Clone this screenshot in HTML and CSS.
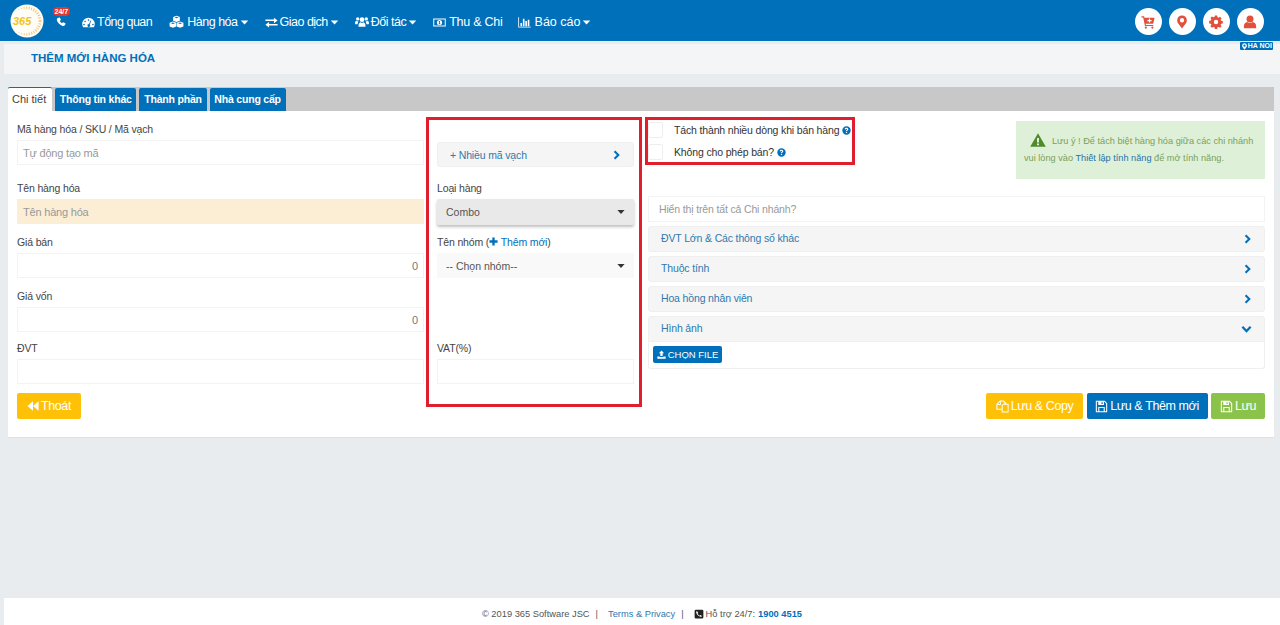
FILE: index.html
```html
<!DOCTYPE html>
<html lang="en">
<head>
  <meta charset="UTF-8" />
  <title>Thêm mới hàng hóa</title>
  <link rel="stylesheet" href="styles.css">
</head>
<body>
  <svg class="sprite" xmlns="http://www.w3.org/2000/svg">
    <symbol id="i-phone" viewBox="0 0 16 16"><path d="M4 1.2 6.2.8l1.6 4L6 6.4c.8 1.7 1.9 2.800 3.600 3.600l1.600-1.800 4 1.600-.4 2.300c-.4 1.900-2.300 2.800-4.300 2.100C6.300 13 3 9.700 1.500 5.600.8 3.600 2.100 1.600 4 1.200z"/></symbol>
    <symbol id="i-gauge" viewBox="0 0 16 16"><path fill-rule="evenodd" d="M8 2.200A7.700 7.700 0 0 0 .3 9.900c0 1.500.4 2.700 1.100 3.900h13.200c.7-1.200 1.100-2.400 1.100-3.900A7.700 7.700 0 0 0 8 2.200zM8 4a1 1 0 1 1 0 2 1 1 0 0 1 0-2zM3.800 5.800a1 1 0 1 1 0 2 1 1 0 0 1 0-2zM2.500 9.600a1 1 0 1 1 0 2 1 1 0 0 1 0-2zm11 0a1 1 0 1 1 0 2 1 1 0 0 1 0-2zM10.600 5.500l.9.400-2 4.500a1.700 1.700 0 1 1-1-.400z"/></symbol>
    <symbol id="i-cubes" viewBox="0 0 18 16"><path fill-rule="evenodd" d="M9 .5l4 1.500v4.400L9 8 5 6.400V2zM9 1.700 6.600 2.600 9 3.500l2.400-.9zM4.700 7.500l4 1.500v4.400l-4 1.600-4-1.600V9zm0 1.200-2.400.9 2.400.9 2.400-.9zm8.600-1.200 4 1.500v4.400l-4 1.600-4-1.600V9zm0 1.200-2.400.9 2.400.9 2.400-.9z"/></symbol>
    <symbol id="i-exchange" viewBox="0 0 16 16"><path d="M.5 4.200h10.500V2l4.500 3.400-4.500 3.400V6.300H.5zM15.500 9.700H5V7.500L.5 10.900 5 14.300v-2.500h10.500z"/></symbol>
    <symbol id="i-users" viewBox="0 0 18 16"><circle cx="9" cy="5" r="3"/><circle cx="3.500" cy="4" r="2.200"/><circle cx="14.500" cy="4" r="2.200"/><path d="M4.500 14c-.3-3 1-5.500 2.500-5.800.6.500 1.300.8 2 .8s1.400-.3 2-.8c1.500.3 2.800 2.800 2.500 5.800zM0 10c0-2 .6-3.500 1.700-3.700.5.400 1.100.7 1.800.7l.9-.1c-.6 1.100-1 2.400-1 4.100H.8C.3 11 0 10.600 0 10zm18 0c0-2-.6-3.500-1.700-3.700-.5.400-1.100.7-1.800.7l-.9-.1c.6 1.100 1 2.400 1 4.100h2.600c.5 0 .8-.4.800-1z"/></symbol>
    <symbol id="i-money" viewBox="0 0 16 16"><path fill-rule="evenodd" d="M.3 3h15.400v10H.3zM1.500 4.200v7.600h13V4.200zM8 4.800a3.200 3.200 0 1 1 0 6.400 3.200 3.200 0 0 1 0-6.400zM7 6.300v.9h.6v2H7V10h2.200v-.8h-.6V6.300z"/></symbol>
    <symbol id="i-chart" viewBox="0 0 16 16"><path d="M.3 1.500h1v11.700h14.400v1H.3zM3 8.500h2v4H3zM6 3.500h2v9H6zM9 6h2v6.500H9zM12 4.500h2v8h-2z"/></symbol>
    <symbol id="i-caret" viewBox="0 0 10 6"><path d="M.5.500h9L5 5.500z"/></symbol>
    <symbol id="i-cart" viewBox="0 0 16 16"><path fill-rule="evenodd" d="M.5 1.500h3l.5 1.500h11.500l-1.500 7H5.300l.3 1.300H14v1.300H4.500L2.500 2.800h-2zM9 4v1.700H7.300V7H9v1.700h1.400V7h1.700V5.700h-1.700V4zM5.500 13a1.300 1.300 0 1 1 0 2.600 1.300 1.300 0 0 1 0-2.600zm7.500 0a1.300 1.300 0 1 1 0 2.600 1.300 1.300 0 0 1 0-2.600z"/></symbol>
    <symbol id="i-marker" viewBox="0 0 16 16"><path fill-rule="evenodd" d="M8 .5a5.500 5.500 0 0 0-5.500 5.500c0 1.200.3 2 .8 3L8 15.500 12.700 9c.5-1 .8-1.800.8-3A5.500 5.500 0 0 0 8 .500zm0 3a2.500 2.500 0 1 1 0 5 2.500 2.500 0 0 1 0-5z"/></symbol>
    <symbol id="i-cog" viewBox="0 0 16 16"><path fill-rule="evenodd" d="M6.700.5h2.600l.4 2 1.200.5 1.700-1.100 1.800 1.800-1.100 1.700.5 1.200 2 .4v2.600l-2 .4-.5 1.200 1.100 1.700-1.800 1.800-1.700-1.100-1.200.5-.4 2H6.700l-.4-2-1.200-.5-1.700 1.100-1.800-1.800 1.100-1.700-.5-1.200-2-.4V6.700l2-.4.5-1.200-1.100-1.700 1.800-1.800 1.700 1.100 1.200-.5zM8 5.500a2.500 2.500 0 1 0 0 5 2.500 2.500 0 0 0 0-5z"/></symbol>
    <symbol id="i-user" viewBox="0 0 16 16"><circle cx="8" cy="4.500" r="4"/><path d="M1 15v-2.500C1 10 2.800 8.300 4.800 8c.8.700 2 1.100 3.200 1.100s2.400-.4 3.200-1.100c2 .3 3.800 2 3.800 4.500V15z"/></symbol>
    <symbol id="i-right" viewBox="0 0 10 12"><path d="M2.800.5 8.500 6l-5.700 5.500L1 9.700 4.900 6 1 2.300z"/></symbol>
    <symbol id="i-down" viewBox="0 0 12 10"><path d="M.5 2.800 2.300 1 6 4.900 9.700 1l1.800 1.800L6 8.500z"/></symbol>
    <symbol id="i-plus" viewBox="0 0 10 10"><path d="M3.700.5h2.600v3.200h3.200v2.600H6.300v3.200H3.700V6.300H.5V3.700h3.200z"/></symbol>
    <symbol id="i-help" viewBox="0 0 16 16"><path fill-rule="evenodd" d="M8 .5a7.500 7.500 0 1 1 0 15 7.500 7.500 0 0 1 0-15zM8 3C6.300 3 5 3.900 4.600 5.400l1.900.7C6.700 5.400 7.200 5 7.900 5c.7 0 1.200.4 1.200.9 0 .5-.4.800-1 1.200-.8.500-1.200 1-1.200 2v.4h2v-.3c0-.4.200-.6.800-1 .9-.6 1.500-1.300 1.500-2.400C11.200 4.100 9.800 3 8 3zM6.900 10.500v2h2.200v-2z"/></symbol>
    <symbol id="i-warning" viewBox="0 0 16 14"><path fill-rule="evenodd" d="M8 .3 15.800 13.700H.2zM7 5v4.500h2V5zM7 10.500v1.800h2v-1.800z"/></symbol>
    <symbol id="i-upload" viewBox="0 0 12 12"><path d="M6 .5 9.500 4.300H7.500V8h-3V4.300H2.500zM.5 8.500h3v.8h5v-.8h3v3h-11z"/></symbol>
    <symbol id="i-copy" viewBox="0 0 16 16"><path fill-rule="evenodd" d="M5 .5h4.500l3 3v1h3v11H7v-3.500H.5V4.500zM5 2 2 5h3zM6 1.700v4.300H1.700v4.800H7V6.500l2.500-2.200h1.700L9 2v-.3zM9.500 5.800 8.200 7.200V14.300h6.100V5.800z"/></symbol>
    <symbol id="i-save" viewBox="0 0 16 16"><path fill-rule="evenodd" d="M1 1h11l3 3v11H1zM2.300 2.300v11.400h1.700V8.500h8v5.200h1.700V4.600L11.500 2.300H11V6H4V2.300zM5.300 9.800v3.900h5.400V9.800zM8 2.800v2.200h1.500V2.800z"/></symbol>
    <symbol id="i-back" viewBox="0 0 14 12"><path d="M7 .5v11L.5 6zM13.500.5v11L7 6z"/></symbol>
    <symbol id="i-phonebox" viewBox="0 0 16 16"><path fill-rule="evenodd" d="M3 1h10a2 2 0 0 1 2 2v10a2 2 0 0 1-2 2H3a2 2 0 0 1-2-2V3a2 2 0 0 1 2-2zm2 2.500L3.500 4c-.4 3.800 3.500 8.400 8.500 8.500l.5-1.800-2.600-1.200-1 1.200C7.500 10 6 8.500 5.700 7.300l1.100-1z"/></symbol>
  </svg>

  <div class="topbar">
    <div class="logo">
      <svg viewBox="0 0 34 34" width="34" height="34">
        <circle cx="17" cy="17" r="16.500" fill="#fffdf6"/>
        <circle cx="17" cy="17" r="13" fill="none" stroke="#f6a93b" stroke-width="3" stroke-dasharray="1 1.500" opacity="0.7"/>
        <circle cx="14" cy="17" r="12.500" fill="#fffdf6"/>
        <text x="3" y="20.500" class="logo-text">365</text>
      </svg>
    </div>
    <div class="hotline">
      <span class="hotline-badge">24/7</span>
      <svg class="ic ic-hotline"><use href="#i-phone"/></svg>
    </div>
    <ul class="menu">
      <li class="m1"><svg class="ic"><use href="#i-gauge"/></svg>Tổng quan</li>
      <li class="m2"><svg class="ic ic-w"><use href="#i-cubes"/></svg>Hàng hóa<svg class="caret"><use href="#i-caret"/></svg></li>
      <li class="m3"><svg class="ic"><use href="#i-exchange"/></svg>Giao dịch<svg class="caret"><use href="#i-caret"/></svg></li>
      <li class="m4"><svg class="ic ic-w"><use href="#i-users"/></svg>Đối tác<svg class="caret"><use href="#i-caret"/></svg></li>
      <li class="m5"><svg class="ic"><use href="#i-money"/></svg>Thu &amp; Chi</li>
      <li class="m6"><svg class="ic"><use href="#i-chart"/></svg>Báo cáo<svg class="caret"><use href="#i-caret"/></svg></li>
    </ul>
    <div class="actions">
      <span class="round"><svg><use href="#i-cart"/></svg></span>
      <span class="round"><svg><use href="#i-marker"/></svg></span>
      <span class="round"><svg><use href="#i-cog"/></svg></span>
      <span class="round"><svg><use href="#i-user"/></svg></span>
    </div>
  </div>

  <div class="titlebar">
    <h1>THÊM MỚI HÀNG HÓA</h1>
    <span class="branch"><svg><use href="#i-marker"/></svg>HA NOI</span>
  </div>

  <div class="content">
    <div class="tabs">
      <span class="tab active">Chi tiết</span>
      <span class="tab">Thông tin khác</span>
      <span class="tab">Thành phần</span>
      <span class="tab">Nhà cung cấp</span>
    </div>
    <div class="card">
      <div class="col col-left">
        <label class="field-label first">Mã hàng hóa / SKU / Mã vạch</label>
        <div class="input placeholder">Tự động tạo mã</div>
        <label class="field-label tall">Tên hàng hóa</label>
        <div class="input input-required placeholder">Tên hàng hóa</div>
        <label class="field-label">Giá bán</label>
        <div class="input number">0</div>
        <label class="field-label">Giá vốn</label>
        <div class="input number">0</div>
        <label class="field-label tight">ĐVT</label>
        <div class="input"></div>
        <button class="btn btn-yellow btn-exit"><svg><use href="#i-back"/></svg>Thoát</button>
      </div>

      <div class="col col-mid">
        <div class="bar bar-barcode">+ Nhiều mã vạch<svg class="chev"><use href="#i-right"/></svg></div>
        <label class="field-label label-type">Loại hàng</label>
        <div class="select select-active">Combo<svg class="sel-caret"><use href="#i-caret"/></svg></div>
        <label class="field-label label-group">Tên nhóm (<svg class="plus"><use href="#i-plus"/></svg> <a>Thêm mới</a>)</label>
        <div class="select select-group">-- Chọn nhóm--<svg class="sel-caret"><use href="#i-caret"/></svg></div>
        <label class="field-label label-vat">VAT(%)</label>
        <div class="input"></div>
      </div>

      <div class="col col-right">
        <div class="right-top">
          <div class="checks">
            <div class="check"><span class="box"></span>Tách thành nhiều dòng khi bán hàng<svg class="help"><use href="#i-help"/></svg></div>
            <div class="check"><span class="box"></span>Không cho phép bán?<svg class="help"><use href="#i-help"/></svg></div>
          </div>
          <div class="notice">
            <p><svg class="warn"><use href="#i-warning"/></svg>Lưu ý ! Để tách biệt hàng hóa giữa các chi nhánh</p>
            <p>vui lòng vào <a>Thiết lập tính năng</a> để mở tính năng.</p>
          </div>
        </div>
        <div class="input placeholder all-branch">Hiển thị trên tất cả Chi nhánh?</div>
        <div class="bar">ĐVT Lớn &amp; Các thông số khác<svg class="chev"><use href="#i-right"/></svg></div>
        <div class="bar">Thuộc tính<svg class="chev"><use href="#i-right"/></svg></div>
        <div class="bar">Hoa hồng nhân viên<svg class="chev"><use href="#i-right"/></svg></div>
        <div class="bar bar-open">Hình ảnh<svg class="chev-down"><use href="#i-down"/></svg></div>
        <div class="bar-body"><button class="btn-file"><svg><use href="#i-upload"/></svg>CHỌN FILE</button></div>
        <div class="buttons">
          <button class="btn btn-yellow"><svg><use href="#i-copy"/></svg>Lưu &amp; Copy</button>
          <button class="btn btn-blue"><svg><use href="#i-save"/></svg>Lưu &amp; Thêm mới</button>
          <button class="btn btn-green"><svg><use href="#i-save"/></svg>Lưu</button>
        </div>
      </div>

      <div class="mark mark-mid"></div>
      <div class="mark mark-checks"></div>
    </div>
  </div>

  <div class="footer">
    <span>© 2019 365 Software JSC</span><span class="sep">|</span>
    <a>Terms &amp; Privacy</a><span class="sep">|</span>
    <svg><use href="#i-phonebox"/></svg><span>Hỗ trợ 24/7:</span><b>1900 4515</b>
  </div>
</body>
</html>
```

FILE: styles.css
```css
* { box-sizing: border-box; }

body {
  margin: 0;
  height: 625px;
  overflow: hidden;
  display: flex;
  flex-direction: column;
  background: #e9ecef;
  font-family: "Liberation Sans", Arial, sans-serif;
  font-size: 11px;
  color: #444;
}

.sprite { display: none; }

a { color: #0070ba; }

svg { fill: currentColor; }

/* top bar */
.topbar {
  height: 41px;
  flex: none;
  background: #0070ba;
  color: #fff;
  display: flex;
  align-items: center;
  padding-left: 10px;
}

.logo {
  width: 34px;
  height: 34px;
  flex: none;
}

.logo svg { display: block; }

.logo-text {
  font-size: 11px;
  font-weight: bold;
  font-style: italic;
  fill: #f2c318;
}

.hotline {
  position: relative;
  width: 38px;
  height: 41px;
  flex: none;
}

.hotline-badge {
  position: absolute;
  left: 9px;
  top: 7px;
  padding: 0 1.500px;
  height: 9px;
  line-height: 9px;
  border-radius: 5px;
  background: #e2372f;
  font-size: 7px;
  font-weight: bold;
}

.ic-hotline {
  position: absolute;
  left: 12px;
  top: 17px;
  width: 10px;
  height: 10px;
}

.menu {
  list-style: none;
  margin: 3px 0 0;
  padding: 0;
  display: flex;
  font-size: 12.500px;
  letter-spacing: -0.5px;
}

.menu li {
  display: flex;
  align-items: center;
  white-space: nowrap;
}

.menu .ic {
  width: 13px;
  height: 13px;
  margin-right: 2px;
}

.menu .ic-w {
  width: 15px;
  height: 14px;
  margin-right: 3px;
}

.menu .m4 .ic-w {
  width: 14px;
  margin-right: 2px;
}

.menu .caret {
  width: 9px;
  height: 5px;
  margin-left: 2px;
}

.m2 { margin-left: 17px; }
.m3 { margin-left: 16px; }
.m4 { margin-left: 16px; }

.menu .m5 {
  margin-left: 16px;
  letter-spacing: -0.25px;
}

.menu .m5 .ic { margin-right: 3px; }

.menu .m6 {
  margin-left: 15px;
  letter-spacing: 0;
}

.menu .m6 .ic { margin-right: 4px; }

.actions {
  margin: 2px 16.500px 0 auto;
  display: flex;
  gap: 7px;
}

.round {
  width: 27px;
  height: 27px;
  border-radius: 50%;
  background: #fff;
  color: #e2503c;
  display: flex;
  align-items: center;
  justify-content: center;
}

.round svg {
  width: 14px;
  height: 14px;
}

/* page title */
.titlebar {
  position: relative;
  height: 30px;
  flex: none;
  margin: 3px 0 13px 4px;
  padding: 0 0 2px 27px;
  background: #f3f5f7;
  display: flex;
  align-items: center;
}

.titlebar h1 {
  margin: 0;
  font-size: 11.500px;
  color: #0070ba;
}

.branch {
  position: absolute;
  right: 7px;
  top: -2px;
  height: 8px;
  padding: 0 1px;
  border-radius: 1px;
  background: #0070ba;
  color: #fff;
  font-size: 7px;
  font-weight: bold;
  line-height: 8px;
  display: flex;
  align-items: center;
}

.branch svg {
  width: 7px;
  height: 7px;
}

/* tabs and card */
.content {
  margin: 0 6px 0 8px;
}

.tabs {
  height: 24px;
  background: #c8c8c8;
  display: flex;
  align-items: flex-end;
  gap: 3px;
}

.tab {
  height: 23px;
  padding: 0 4.800px;
  border-radius: 2px 2px 0 0;
  background: #0070ba;
  color: #fff;
  font-size: 10.500px;
  letter-spacing: -0.2px;
  font-weight: bold;
  line-height: 23px;
}

.tab.active {
  width: 44px;
  height: 24px;
  padding: 0 4px;
  border-top: 1px solid #0070ba;
  background: #fff;
  color: #444;
  font-size: 11px;
  letter-spacing: 0;
  font-weight: normal;
}

.card {
  position: relative;
  height: 327px;
  padding: 0 9px;
  background: #fff;
  border-bottom: 1px solid #dde1e4;
  display: grid;
  grid-template-columns: 407px 198px 617px;
  column-gap: 13px;
}

.col {
  display: flex;
  flex-direction: column;
  align-items: stretch;
}

.col-mid { padding-right: 1px; }

.field-label {
  display: block;
  height: 13px;
  line-height: 13px;
  margin: 12px 0 4px;
  font-size: 10.500px;
  letter-spacing: -0.15px;
}

.field-label.tall { margin-top: 17px; }
.field-label.tight { margin-top: 10px; }

.input {
  height: 25px;
  line-height: 24px;
  padding: 0 5px;
  border: 1px solid #f3f3f3;
  background: #fff;
  font-size: 11px;
  letter-spacing: -0.2px;
}

.placeholder { color: #999; }

.input-required {
  background: #fbeed5;
  border-color: #fbeed5;
}

.number {
  text-align: right;
  color: #777;
}

.btn {
  height: 26px;
  padding: 0;
  border: 0;
  border-radius: 2px;
  color: #fff;
  font-family: inherit;
  font-size: 12.500px;
  letter-spacing: -0.4px;
  display: inline-flex;
  align-items: center;
  justify-content: center;
}

.btn svg {
  width: 12px;
  height: 12px;
  margin-right: 2px;
}

.btn-yellow { background: #ffc107; }
.btn-blue { background: #0070ba; }
.btn-green { background: #8bc34a; }

.btn-exit {
  width: 64px;
  margin-top: 9px;
}

/* middle column */
.bar {
  position: relative;
  height: 25px;
  padding: 0 12px;
  line-height: 24px;
  background: #f5f5f5;
  border: 1px solid #efefef;
  border-radius: 3px;
  color: #2f79ae;
  font-size: 10.500px;
  letter-spacing: -0.15px;
  flex: none;
}

.bar-barcode { margin-top: 31px; }

.chev {
  position: absolute;
  right: 12px;
  top: 7px;
  width: 8px;
  height: 10px;
  color: #0070ba;
}

.chev-down {
  position: absolute;
  right: 12px;
  top: 8px;
  width: 11px;
  height: 9px;
  color: #0070ba;
}

.select {
  position: relative;
  height: 26px;
  padding: 0 9px;
  line-height: 26px;
  background: #f9f9f9;
  font-size: 10.500px;
  color: #555;
}

.select-group { height: 25px; }

.select-active {
  background: #e9e9e9;
  box-shadow: 0 2px 3px rgba(0,0,0,0.25);
  border-radius: 2px;
}

.sel-caret {
  position: absolute;
  right: 9px;
  top: 10px;
  width: 8px;
  height: 6px;
  color: #333;
}

.plus {
  width: 9px;
  height: 9px;
  color: #0070ba;
}

.field-label.label-type { margin-top: 15px; }
.field-label.label-group { margin-top: 11px; }
.field-label.label-vat { margin-top: 64px; }

/* right column */
.col-right .bar {
  height: 26px;
  line-height: 23px;
  margin-bottom: 4px;
}

.right-top {
  display: flex;
  justify-content: space-between;
  height: 85px;
  flex: none;
  padding-top: 10px;
}

.checks {
  display: flex;
  flex-direction: column;
  gap: 6px;
  padding-top: 1px;
}

.check {
  display: flex;
  align-items: center;
  height: 16px;
  font-size: 10.500px;
  letter-spacing: -0.15px;
  color: #333;
}

.box {
  width: 15px;
  height: 16px;
  margin-right: 11px;
  border: 1px solid #eee;
  border-radius: 2px;
  background: #fff;
}

.help {
  width: 9px;
  height: 9px;
  margin-left: 3px;
  color: #0070ba;
}

.notice {
  width: 249px;
  height: 58px;
  background: #dff0d8;
  color: #7aa05a;
  font-size: 9.200px;
  padding: 12px 0 0 8px;
}

.notice p {
  margin: 0;
  height: 17px;
  line-height: 17px;
  white-space: nowrap;
}

.notice p:first-child { padding-left: 6px; }

.notice a { color: #1f72a8; }

.warn {
  width: 16px;
  height: 14px;
  margin-right: 6px;
  color: #4f8a2c;
  vertical-align: -3px;
}

.all-branch {
  height: 26px;
  padding: 0 10px;
  margin-bottom: 4px;
  font-size: 10.500px;
  letter-spacing: -0.15px;
  flex: none;
}

.col-right .bar-open {
  margin-bottom: 0;
  border-radius: 3px 3px 0 0;
}

.bar-body {
  height: 27px;
  padding: 4px 4px 0;
  border: 1px solid #efefef;
  border-top: 0;
  border-radius: 0 0 3px 3px;
  flex: none;
}

.btn-file {
  height: 17px;
  width: 69px;
  padding: 0;
  border: 0;
  border-radius: 2px;
  background: #0070ba;
  color: #fff;
  font-family: inherit;
  font-size: 9.500px;
  display: flex;
  align-items: center;
  justify-content: center;
}

.btn-file svg {
  width: 9px;
  height: 9px;
  margin-right: 2px;
}

.buttons {
  margin-top: 24px;
  display: flex;
  justify-content: flex-end;
  gap: 3.500px;
}

.buttons .btn svg {
  width: 13px;
  height: 13px;
  margin-right: 2px;
}

.buttons .btn-yellow { width: 97px; }
.buttons .btn-blue { width: 121px; }
.buttons .btn-green { width: 54px; }

/* red marks drawn over the form */
.mark {
  position: absolute;
  border: 3px solid #e01e2e;
  pointer-events: none;
}

.mark-mid {
  left: 418px;
  top: 6px;
  width: 216px;
  height: 290px;
}

.mark-checks {
  left: 637px;
  top: 6px;
  width: 210px;
  height: 48px;
}

/* footer */
.footer {
  margin-top: auto;
  height: 27px;
  flex: none;
  margin-left: 4px;
  padding-top: 4px;
  background: #fff;
  display: flex;
  align-items: center;
  justify-content: center;
  font-size: 9.300px;
  color: #555;
  white-space: pre;
}

.footer a { color: #2f79ae; }

.footer .sep { margin: 0 10px 0 6px; }

.footer svg {
  width: 10px;
  height: 10px;
  margin-right: 2px;
  color: #222;
}

.footer b {
  margin-left: 3px;
  color: #0070ba;
}
```
